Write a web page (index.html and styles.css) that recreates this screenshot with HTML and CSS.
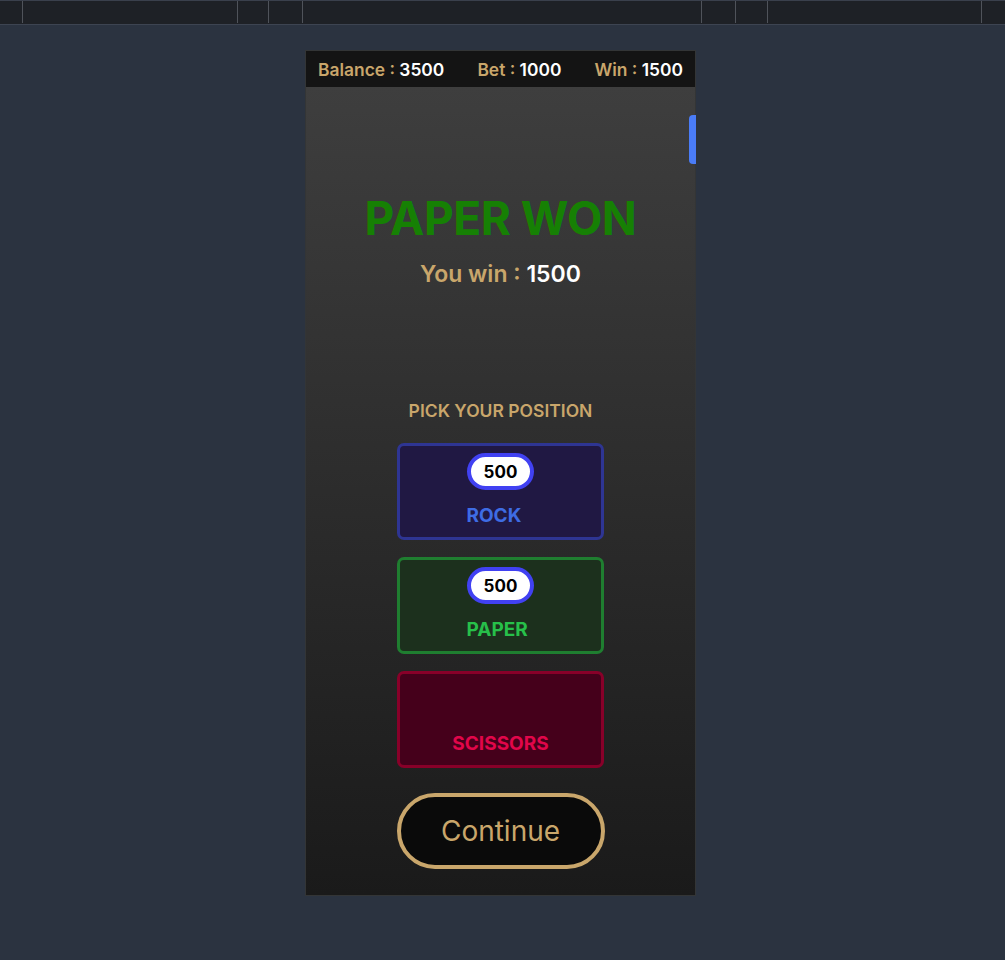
FILE: index.html
```html
<!DOCTYPE html>
<html lang="en">
<head>
<meta charset="utf-8">
<title>Rock Paper Scissors</title>
<link rel="stylesheet" href="styles.css">
</head>
<body>
<div class="toolbar">
  <span class="cell c1"></span>
  <span class="cell c2"></span>
  <span class="cell c3"></span>
  <span class="cell c4"></span>
  <span class="cell c5"></span>
  <span class="cell c6"></span>
  <span class="cell c7"></span>
  <span class="cell c8"></span>
  <span class="cell c9"></span>
</div>
<div class="phone">
  <div class="hud">
    <span class="stat"><span class="key">Balance : </span><span class="val">3500</span></span>
    <span class="stat"><span class="key">Bet : </span><span class="val">1000</span></span>
    <span class="stat"><span class="key">Win : </span><span class="val">1500</span></span>
  </div>
  <div class="stage">
    <div class="scroll-tab"></div>
    <h1 class="result">PAPER WON</h1>
    <div class="winline"><span class="key">You win : </span><span class="val">1500</span></div>
    <div class="pick">PICK YOUR POSITION</div>
    <div class="choices">
      <div class="choice rock"><span class="chip">500</span><span class="label">ROCK</span></div>
      <div class="choice paper"><span class="chip">500</span><span class="label">PAPER</span></div>
      <div class="choice scissors"><span class="chip empty">500</span><span class="label">SCISSORS</span></div>
    </div>
    <button class="continue">Continue</button>
  </div>
</div>
</body>
</html>
```
FILE: styles.css
```css
html, body {
  margin: 0;
  padding: 0;
}
body {
  background: #2b3340;
  font-family: Inter, "Noto Sans", "Liberation Sans", sans-serif;
  min-height: 960px;
}
.toolbar {
  height: 23px;
  background: #1e2126;
  border-top: 1px solid #3a404c;
  border-bottom: 1px solid #3d4451;
  display: flex;
}
.cell {
  display: block;
  height: 22px;
  border-left: 1px solid #4f535a;
  box-sizing: border-box;
}
.cell.c1 { width: 22px; border-left: none; }
.cell.c2 { width: 215px; }
.cell.c3 { width: 31px; }
.cell.c4 { width: 34px; }
.cell.c5 { width: 399px; }
.cell.c6 { width: 34px; }
.cell.c7 { width: 32px; }
.cell.c8 { width: 214px; }
.cell.c9 { width: 10px; }

.phone {
  margin: 25px 0 0 305px;
  width: 391px;
  box-sizing: border-box;
  border: 1px solid #333536;
  background: #1b1b1b;
}
.hud {
  height: 36px;
  background: #141414;
  display: flex;
  justify-content: space-between;
  align-items: center;
  padding: 0 12px;
  font-size: 17.4px;
  font-weight: 600;
}
.key { color: #c9a66b; }
.val { color: #ffffff; }

.stage {
  position: relative;
  height: 808px;
  box-sizing: border-box;
  background: linear-gradient(#3e3e3e, #1a1a1a);
  display: flex;
  flex-direction: column;
  align-items: center;
  padding-top: 103px;
}
.scroll-tab {
  position: absolute;
  right: -1px;
  top: 28px;
  width: 7px;
  height: 49px;
  background: #4a7cf7;
  border-radius: 4px 0 0 4px;
}
.result {
  margin: 0;
  font-size: 46px;
  line-height: 56px;
  font-weight: 700;
  color: #168004;
  letter-spacing: -0.5px;
}
.winline {
  margin-top: 13px;
  font-size: 23px;
  line-height: 30px;
  font-weight: 600;
}
.pick {
  margin-top: 112px;
  font-size: 17.5px;
  line-height: 20px;
  font-weight: 600;
  color: #c9a66b;
}
.choices {
  margin-top: 22px;
  display: flex;
  flex-direction: column;
  gap: 17px;
}
.choice {
  width: 207px;
  height: 97px;
  box-sizing: border-box;
  border: 3px solid;
  border-radius: 7px;
  display: flex;
  flex-direction: column;
  align-items: center;
  padding-top: 7px;
}
.chip {
  width: 67px;
  height: 37px;
  box-sizing: border-box;
  border: 4px solid #4141f2;
  border-radius: 19px;
  background: #ffffff;
  color: #000000;
  font-size: 17px;
  font-weight: 700;
  display: flex;
  align-items: center;
  justify-content: center;
}
.chip.empty { visibility: hidden; }
.label {
  margin-top: 14px;
  min-width: 68px;
  text-align: left;
  font-size: 19px;
  line-height: 24px;
  font-weight: 700;
  white-space: nowrap;
}
.rock { background: #201843; border-color: #2e3593; }
.rock .label { color: #3e6ce4; }
.paper { background: #1c301d; border-color: #1f7e30; }
.paper .label { color: #27c04a; }
.scissors { background: #45001b; border-color: #880029; }
.scissors .label { color: #e1064a; }

.continue {
  margin-top: 25px;
  width: 208px;
  height: 76px;
  box-sizing: border-box;
  border: 4px solid #c9a66b;
  border-radius: 38px;
  background: #0a0a0a;
  color: #c9a66b;
  font-family: Inter, "Noto Sans", "Liberation Sans", sans-serif;
  font-size: 28px;
  font-weight: 400;
  cursor: pointer;
}
```
